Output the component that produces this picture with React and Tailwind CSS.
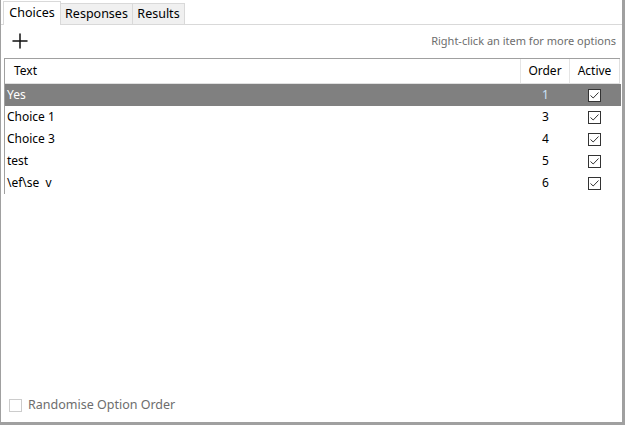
import { Plus } from 'lucide-react';

const rows = [
  { text: 'Yes', order: 1, selected: true },
  { text: 'Choice 1', order: 3 },
  { text: 'Choice 3', order: 4 },
  { text: 'test', order: 5 },
  { text: '\\ef\\se  v', order: 6 },
];

function Check({ checked = true, disabled = false }) {
  return (
    <div
      className={
        'w-[13px] h-[13px] border flex items-center justify-center bg-white ' +
        (disabled ? 'border-[#cccccc]' : 'border-[#333333]')
      }
    >
      {checked && (
        <svg width="11" height="11" viewBox="0 0 11 11">
          <path d="M1.5 5.5 L4.2 8 L9.5 2.5" fill="none" stroke="#333" strokeWidth="1" />
        </svg>
      )}
    </div>
  );
}

export default function App() {
  return (
    <div
      className="w-[625px] h-[425px] bg-white flex flex-col border-l border-r-[3px] border-b-[3px] border-[#a0a0a0] text-[12px] text-black"
      style={{ fontFamily: '"Noto Sans", "Open Sans", sans-serif' }}
    >
      {/* Tabs */}
      <div className="flex items-end h-[25px] pl-[2px] border-b border-[#d9d9d9] shrink-0">
        <div className="h-[24px] w-[58px] flex items-center justify-center bg-white border border-b-0 border-[#d9d9d9] -mb-px relative z-10 text-[12.5px]">
          Choices
        </div>
        <div className="h-[21px] w-[72px] flex items-center justify-center bg-[#f0f0f0] border border-l-0 border-b-0 border-[#d9d9d9] text-[12.5px]">
          Responses
        </div>
        <div className="h-[21px] w-[52px] flex items-center justify-center bg-[#f0f0f0] border border-l-0 border-b-0 border-[#d9d9d9] text-[12.5px]">
          Results
        </div>
      </div>

      {/* Panel */}
      <div className="flex-1 flex flex-col min-h-0">
        <div className="flex items-center justify-between h-[32px] pl-[7px] pr-[6px] shrink-0">
          <Plus size={24} strokeWidth={1.5} color="#111" />
          <span className="text-[11px] text-[#6d6d6d]">Right-click an item for more options</span>
        </div>

        <div className="ml-[3px] mr-[1px] mt-px flex flex-col flex-1">
          <div className="flex h-[26px] mr-[1px] border-t border-l border-[#a0a0a0]">
            <div className="flex-1 flex border-b border-r border-[#e0e0e0] text-[12px]">
              <div className="flex-1 flex items-center pl-[9px]">Text</div>
              <div className="w-[49px] flex items-center justify-center border-l border-[#e5e5e5]">Order</div>
              <div className="w-[50px] flex items-center justify-center border-l border-[#e5e5e5]">Active</div>
            </div>
          </div>
          <div className="border-l border-[#a0a0a0]">
            {rows.map((r) => (
              <div
                key={r.order}
                className={'flex h-[22px] items-center ' + (r.selected ? 'bg-[#808080] text-white' : '')}
              >
                <div className="flex-1 pl-[2px] whitespace-pre">{r.text}</div>
                <div className={'w-[49px] text-center ' + (r.selected ? 'text-[#cce4f7]' : '')}>{r.order}</div>
                <div className="w-[51px] flex justify-center pr-[2px]">
                  <Check />
                </div>
              </div>
            ))}
          </div>
        </div>

        <div className="flex items-center gap-[6px] pl-[8px] pt-[10px] pb-[7px] text-[12.5px] text-[#6d6d6d]">
          <Check checked={false} disabled />
          <span>Randomise Option Order</span>
        </div>
      </div>
    </div>
  );
}
